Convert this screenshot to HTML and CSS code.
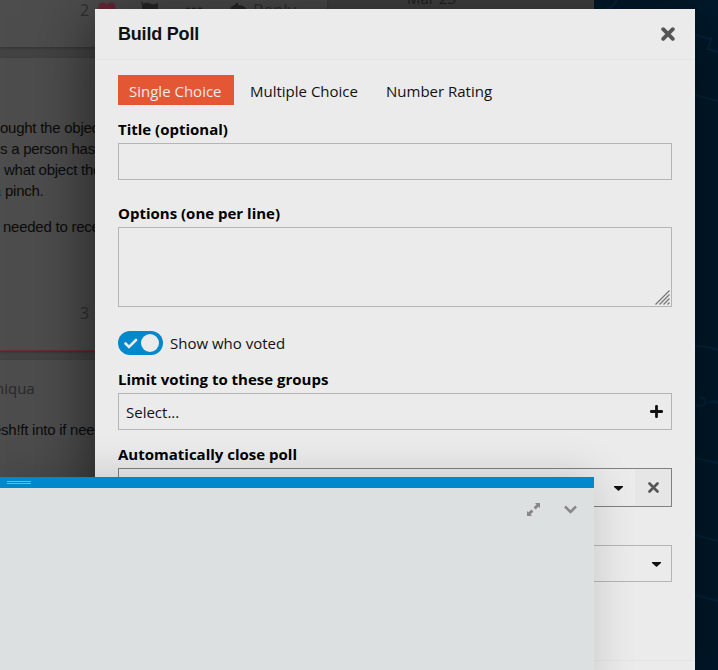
FILE: index.html
```
<!DOCTYPE html>
<html lang="en">
<head>
<meta charset="utf-8">
<title>Build Poll</title>
<link rel="stylesheet" href="styles.css">
</head>
<body>
<svg class="circuit" width="124" height="670" viewBox="0 0 124 670" fill="none">
  <path d="M12 10Q20 6 23 0M101 35 117 39 114 49 124 52M101 95 124 101M101 346Q113 346 124 350M102 404Q104 408 110 405Q114 399 106 397M114 403Q119 400 124 403M101 458 124 463M101 535 124 541M101 595 124 601"/>
</svg>
<main class="stream">
  <article class="post first">
    <div class="actions">
      <span class="likes">2</span>
      <svg class="heart" width="18" height="16" viewBox="0 0 18 16"><path d="M9 16 1.5 8.500C-2 4 3-3 9 2.500C15-3 20 4 16.500 8.500Z"/></svg>
      <svg class="flag" width="18" height="18" viewBox="0 0 18 18"><path d="M0 1H2V3Q6 0 10 3Q13 4 17 2V12Q12 15 8 12Q5 11 3 13V18H1V3Z"/></svg>
      <svg class="dots" width="18" height="6" viewBox="0 0 18 6"><circle cx="3" cy="3" r="2.500"/><circle cx="9" cy="3" r="2.500"/><circle cx="15" cy="3" r="2.500"/></svg>
      <svg class="reply-icon" width="18" height="14" viewBox="0 0 18 14"><path d="M0 6 8 0V3Q17 3 18 12Q14 8 8 9V12Z"/></svg>
      <span class="reply">Reply</span>
    </div>
    <span class="date">Mar 23</span>
  </article>
  <article class="post second">
    <p>ought the object<br>s a person has<br><span class="indent">what object the</span><br><span class="pinch"><a>a</a> pinch.</span></p>
    <p class="needed">needed to rece</p>
    <span class="count">3</span>
  </article>
  <article class="post third">
    <span class="author">niqua</span>
    <p>esh!ft into if need</p>
  </article>
</main>

<section class="modal">
  <header class="modal-header">
    <h1>Build Poll</h1>
    <svg width="14" height="14" viewBox="0 0 14 14" class="close"><path d="M2.200 2.200 11.800 11.800M11.800 2.200 2.200 11.800"/></svg>
  </header>
  <div class="modal-body">
    <nav class="tabs"><span class="tab active">Single Choice</span><span class="tab multiple">Multiple Choice</span><span class="tab rating">Number Rating</span></nav>
    <label class="label">Title (optional)</label>
    <div class="field title-field"></div>
    <label class="label">Options (one per line)</label>
    <div class="field area">
      <svg width="15" height="15" viewBox="0 0 15 15" class="grip"><path d="M0.500 14.500 14.500 .5M4.500 14.500 14.500 4.500M8.500 14.500 14.500 8.500M12.500 14.500 14.500 12.500"/></svg>
    </div>
    <div class="switch-row">
      <span class="switch"><svg width="14" height="11" viewBox="0 0 14 11"><path d="M1.500 5.500 5 9 12 2"/></svg><i></i></span>
      <span>Show who voted</span>
    </div>
    <label class="label">Limit voting to these groups</label>
    <div class="field select">
      <span>Select...</span>
      <svg width="13" height="13" viewBox="0 0 13 13" class="plus"><path d="M6.500 1.300V11.700M1.300 6.500H11.700"/></svg>
    </div>
    <label class="label">Automatically close poll</label>
    <div class="field date-field">
      <svg width="9" height="5" viewBox="0 0 9 5" class="caret"><path d="M0 0H9V1L4.500 5 0 1Z"/></svg>
      <div class="clear"><svg width="11" height="11" viewBox="0 0 11 11"><path d="M1.500 1.500 9.500 9.500M9.500 1.500 1.500 9.500"/></svg></div>
    </div>
    <div class="field chart-field"><svg width="9" height="5" viewBox="0 0 9 5" class="caret"><path d="M0 0H9V1L4.500 5 0 1Z"/></svg></div>
  </div>
  <footer class="modal-footer"></footer>
</section>

<section class="composer">
  <div class="grippie"><i></i></div>
  <div class="controls">
    <svg width="13" height="13" viewBox="0 0 13 13"><path class="arrow" d="M8 0H13V5L11.500 3.700 8.600 6.500 6.600 4.500 9.400 1.600ZM5 13H0V8L1.500 9.300 4.400 6.500 6.400 8.500 3.600 11.400Z"/><path class="gap" d="M4.500 4.500 8.500 8.500"/></svg>
    <svg width="13" height="9" viewBox="0 0 13 9"><path class="chevron" d="M1 1.500 6.500 7 12 1.500"/></svg>
  </div>
</section>
</body>
</html>
```
FILE: styles.css
```
* { box-sizing: border-box; }
html, body { margin: 0; height: 670px; overflow: hidden; }
body {
  position: relative;
  background: #001a2c;
  font: 15px/21px "Open Sans", "Noto Sans", sans-serif;
  color: #111;
}
svg { display: block; flex: none; }
p { margin: 0; }

.circuit { position: absolute; left: 594px; top: 0; }
.circuit path { stroke: #00263f; stroke-width: 2; }

.stream {
  position: relative;
  width: 594px;
  height: 670px;
  overflow: hidden;
  background: #434343;
  white-space: nowrap;
}
.post { width: 327px; background: #4d4d4d; box-shadow: 0 1px 3px rgba(0, 0, 0, .25); }
.post p { font: 15px/21px "Liberation Sans", Arial, sans-serif; letter-spacing: -.25px; color: #0b0b0b; }
.first { display: flex; height: 47px; }
.actions { display: flex; flex: none; width: 327px; padding-left: 80px; color: #303030; }
.actions svg { fill: #282828; margin-top: 2px; }
.likes { width: 18px; font-size: 16px; line-height: 21px; }
.actions .heart { fill: #6b2636; }
.actions .flag { margin: 1px 0 0 25px; }
.actions .dots { margin: 7px 0 0 26px; }
.actions .reply-icon { margin-left: 27px; }
.reply { margin-left: 5px; font-size: 17px; line-height: 20px; }
.date { margin: -12px 0 0 80px; color: #222; }
.second { margin-top: 11px; height: 293px; padding-top: 59px; border-bottom: 1px solid #65302a; }
.indent { margin-left: 4px; }
.pinch { margin-left: -7px; }
.pinch a { color: #163a49; }
.second .needed { margin: 15px 0 0 3px; }
.count { display: block; margin: 66px 0 0 80px; font-size: 16px; color: #303030; }
.third { margin-top: 9px; height: 310px; padding-top: 18px; }
.author { display: block; margin-left: -5px; color: #292929; }
.third p { margin: 20px 0 0 -7px; }

.modal {
  position: absolute;
  left: 95px;
  top: 9px;
  width: 600px;
  height: 680px;
  background: #ebebeb;
  box-shadow: 0 8px 60px rgba(0, 0, 0, .6);
}
.modal-header {
  display: flex;
  align-items: center;
  justify-content: space-between;
  height: 51px;
  padding: 0 20px 0 23px;
  border-bottom: 1px solid #e3e3e3;
}
h1 { margin: 0; font: bold 18px/24px "Liberation Sans", Arial, sans-serif; letter-spacing: -.2px; }
.modal path { fill: none; stroke-linecap: round; }
.close path { stroke: #555; stroke-width: 3.800; }
.modal-body { display: flex; flex-direction: column; height: 600px; padding: 15px 23px 0; }
.tabs { display: flex; height: 30px; margin-bottom: 14px; }
.tab { line-height: 33px; white-space: nowrap; }
.active { width: 116px; padding-left: 11px; background: #e45735; color: #ebebeb; }
.multiple { width: 136px; padding-left: 16px; }
.rating { padding-left: 16px; }
.label { height: 21px; margin-bottom: 3px; font-weight: 700; color: #000; }
.field { display: flex; flex: none; height: 37px; border: 1px solid #b5b5b5; }
.title-field { margin: 0 0 23px; }
.area { height: 80px; align-items: flex-end; justify-content: flex-end; padding: 0 1px 1px 0; margin-bottom: 24px; }
.modal .grip path { stroke: #777; stroke-width: 1.300; stroke-linecap: butt; }
.switch-row { display: flex; align-items: center; gap: 7px; height: 24px; margin-bottom: 14px; }
.switch { display: flex; align-items: center; width: 45px; height: 24px; padding: 0 4px 0 6px; justify-content: space-between; border-radius: 12px; background: #0088cc; }
.switch path { stroke: #ebebeb; stroke-width: 2.600; }
.switch i { width: 18px; height: 18px; border-radius: 50%; background: #ebebeb; }
.select { align-items: center; justify-content: space-between; padding: 1px 8px 0 7px; margin-bottom: 14px; }
.plus { margin-top: -2px; }
.plus path { stroke: #111; stroke-width: 2.800; }
.date-field { height: 39px; margin-bottom: 38px; border-color: #808080; align-items: center; justify-content: flex-end; }
.modal .caret path { fill: #111; }
.date-field .caret { margin: 2px 12px 0 0; }
.clear { display: flex; align-items: center; justify-content: center; width: 36px; height: 37px; background: #e6e6e6; }
.clear path { stroke: #555; stroke-width: 2.600; }
.chart-field { align-items: center; justify-content: flex-end; padding: 1px 10px 0 0; }
.modal-footer { height: 29px; border-top: 1px solid #e3e3e3; }

.composer {
  position: absolute;
  left: 0;
  top: 477px;
  width: 594px;
  height: 220px;
  background: #dce0e1;
  box-shadow: 0 -1px 40px rgba(0, 0, 0, .16);
}
.grippie { display: flex; height: 11px; padding: 4px 7px; background: #0088cc; }
.grippie i { width: 24px; height: 3px; border: solid #66b8e0; border-width: 1px 0; }
.controls { display: flex; align-items: center; justify-content: flex-end; gap: 24px; height: 43px; padding-right: 17px; }
.arrow { fill: #888; }
.gap { stroke: #dce0e1; stroke-width: 1; }
.chevron { fill: none; stroke: #888; stroke-width: 2.500; }
```
